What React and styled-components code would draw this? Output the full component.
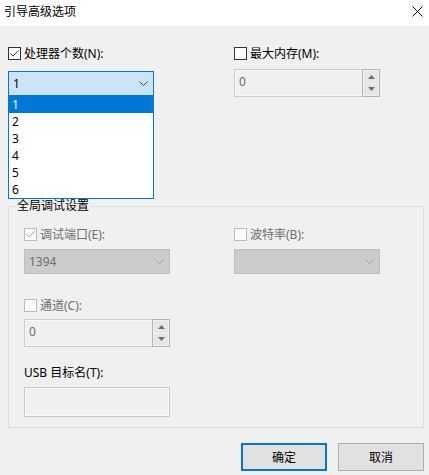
import React from 'react';
import styled, { createGlobalStyle } from 'styled-components';

const Global = createGlobalStyle`
  html, body { margin: 0; padding: 0; background: #f0f0f0; }
  body { font-family: "Noto Sans", "Noto Sans CJK SC", sans-serif; font-size: 12px; color: #000; }
`;

const Dialog = styled.div`width: 429px; height: 475px; background: #f0f0f0; overflow: hidden;`;
const TitleBar = styled.div`display: flex; align-items: center; justify-content: space-between; height: 26px; padding: 0 4px; background: #fff; box-sizing: border-box;`;
const Title = styled.span`font-size: 12px; line-height: 16px; margin-top: -3px;`;
const Body = styled.div`position: relative; padding: 21px 5px 0 8px;`;
const TopGrid = styled.div`display: grid; grid-template-columns: 146px 146px; column-gap: 80px; align-items: start;`;
const Col = styled.div`display: flex; flex-direction: column; position: relative;`;
const CheckRow = styled.label`display: flex; align-items: center; gap: 3px; height: 13px; line-height: 13px; white-space: nowrap; color: ${(p) => (p.disabled ? '#6d6d6d' : '#000')};`;
const Box = styled.span`display: flex; align-items: center; justify-content: center; width: 13px; height: 13px; box-sizing: border-box; border: 1px solid ${(p) => (p.disabled ? '#bcbcbc' : '#333')}; background: ${(p) => (p.disabled ? '#fcfcfc' : '#fff')};`;
const Combo = styled.div`display: flex; align-items: center; justify-content: space-between; box-sizing: border-box; height: 25px; margin-top: ${(p) => p.gap}px; padding: 0 5px 0 4px; border: 1px solid ${(p) => (p.disabled ? '#bfbfbf' : '#0078d7')}; background: ${(p) => (p.disabled ? '#cccccc' : '#cce4f7')}; color: ${(p) => (p.disabled ? '#6d6d6d' : '#000')};`;
const List = styled.div`position: absolute; left: 0; right: 0; top: 49px; border: 1px solid #0078d7; border-top: none; background: #fff; z-index: 2;`;
const Item = styled.div`height: 17px; line-height: 17px; padding-left: 3px; background: ${(p) => (p.selected ? '#0078d7' : '#fff')}; color: ${(p) => (p.selected ? '#fff' : '#000')};`;
const Spin = styled.div`display: flex; box-sizing: border-box; height: 28px; margin-top: ${(p) => p.gap}px; border: 1px solid #cccccc; background: #f0f0f0; box-shadow: inset 0 0 0 1px #f8f8f8;`;
const SpinText = styled.div`flex: 1; padding: 5px 0 0 4px; color: #6d6d6d; line-height: 14px;`;
const SpinButtons = styled.div`display: flex; flex-direction: column; box-sizing: border-box; width: 18px; margin: -1px -1px -1px 0; border: 1px solid #b4b4b4; padding: 1px; gap: 1px; background: #f0f0f0;`;
const SpinBtn = styled.div`flex: 1; display: flex; align-items: center; justify-content: center; background: #e6e6e6;`;
const Group = styled.div`position: relative; margin-top: 109px; height: 222px; box-sizing: border-box; border: 1px solid #dcdcdc; padding: 21px 0 0 15px;`;
const Legend = styled.span`position: absolute; top: -9px; left: 7px; padding: 0 1px; background: #f0f0f0; line-height: 16px;`;
const GroupGrid = styled.div`display: grid; grid-template-columns: 146px 146px; column-gap: 64px; align-items: start;`;
const Row2 = styled.div`display: flex; flex-direction: column; width: 146px; margin-top: 25px;`;
const UsbLabel = styled.div`margin-top: 18px; height: 16px; line-height: 16px;`;
const TextBox = styled.div`box-sizing: border-box; height: 30px; margin-top: 6px; border: 1px solid #c9c9c9; background: #f0f0f0; box-shadow: inset 0 0 0 1px #fafafa;`;
const Buttons = styled.div`display: flex; justify-content: flex-end; gap: 11px; margin-top: 15px;`;
const Button = styled.div`display: flex; align-items: center; justify-content: center; box-sizing: border-box; width: 86px; height: 28px; background: #e1e1e1; border: ${(p) => (p.primary ? '2px solid #0078d7' : '1px solid #adadad')};`;

const Check = ({ color }) => (
  <svg width="11" height="11" viewBox="0 0 11 11">
    <path d="M1.5 5.5 L4 8 L9.5 2.5" fill="none" stroke={color} strokeWidth="1" />
  </svg>
);

const Chevron = ({ color }) => (
  <svg width="9" height="5" viewBox="0 0 9 5">
    <path d="M0.5 0.5 L4.5 4.5 L8.5 0.5" fill="none" stroke={color} strokeWidth="1" />
  </svg>
);

const Arrow = ({ up }) => (
  <svg width="7" height="4" viewBox="0 0 7 4">
    <path d={up ? 'M0 4 L7 4 L3.5 0 Z' : 'M0 0 L7 0 L3.5 4 Z'} fill="#6d6d6d" />
  </svg>
);

const CheckBox = ({ label, checked, disabled }) => (
  <CheckRow disabled={disabled}>
    <Box disabled={disabled}>{checked ? <Check color={disabled ? '#a6a6a6' : '#333'} /> : null}</Box>
    {label}
  </CheckRow>
);

const SpinBox = ({ value, gap }) => (
  <Spin gap={gap}>
    <SpinText>{value}</SpinText>
    <SpinButtons>
      <SpinBtn><Arrow up /></SpinBtn>
      <SpinBtn><Arrow /></SpinBtn>
    </SpinButtons>
  </Spin>
);

const App = () => {
  const counts = ['1', '2', '3', '4', '5', '6'];
  return (
    <Dialog>
      <Global />
      <TitleBar>
        <Title>引导高级选项</Title>
        <svg width="11" height="11" viewBox="0 0 11 11" style={{ marginRight: 2, marginTop: -3 }}>
          <path d="M0.5 0.5 L10.5 10.5 M10.5 0.5 L0.5 10.5" stroke="#000" strokeWidth="1" />
        </svg>
      </TitleBar>
      <Body>
        <TopGrid>
          <Col>
            <CheckBox label="处理器个数(N):" checked />
            <Combo gap={11}>
              <span>1</span>
              <Chevron color="#444" />
            </Combo>
            <List>
              {counts.map((c, i) => <Item key={c} selected={i === 0}>{c}</Item>)}
            </List>
          </Col>
          <Col>
            <CheckBox label="最大内存(M):" />
            <SpinBox value="0" gap={9} />
          </Col>
        </TopGrid>
        <Group>
          <Legend>全局调试设置</Legend>
          <GroupGrid>
            <Col>
              <CheckBox label="调试端口(E):" checked disabled />
              <Combo gap={8} disabled>
                <span>1394</span>
                <Chevron color="#a0a0a0" />
              </Combo>
            </Col>
            <Col>
              <CheckBox label="波特率(B):" disabled />
              <Combo gap={8} disabled>
                <span />
                <Chevron color="#a0a0a0" />
              </Combo>
            </Col>
          </GroupGrid>
          <Row2>
            <CheckBox label="通道(C):" disabled />
            <SpinBox value="0" gap={7} />
            <UsbLabel>USB 目标名(T):</UsbLabel>
            <TextBox />
          </Row2>
        </Group>
        <Buttons>
          <Button primary>确定</Button>
          <Button>取消</Button>
        </Buttons>
      </Body>
    </Dialog>
  );
};

export default App;
